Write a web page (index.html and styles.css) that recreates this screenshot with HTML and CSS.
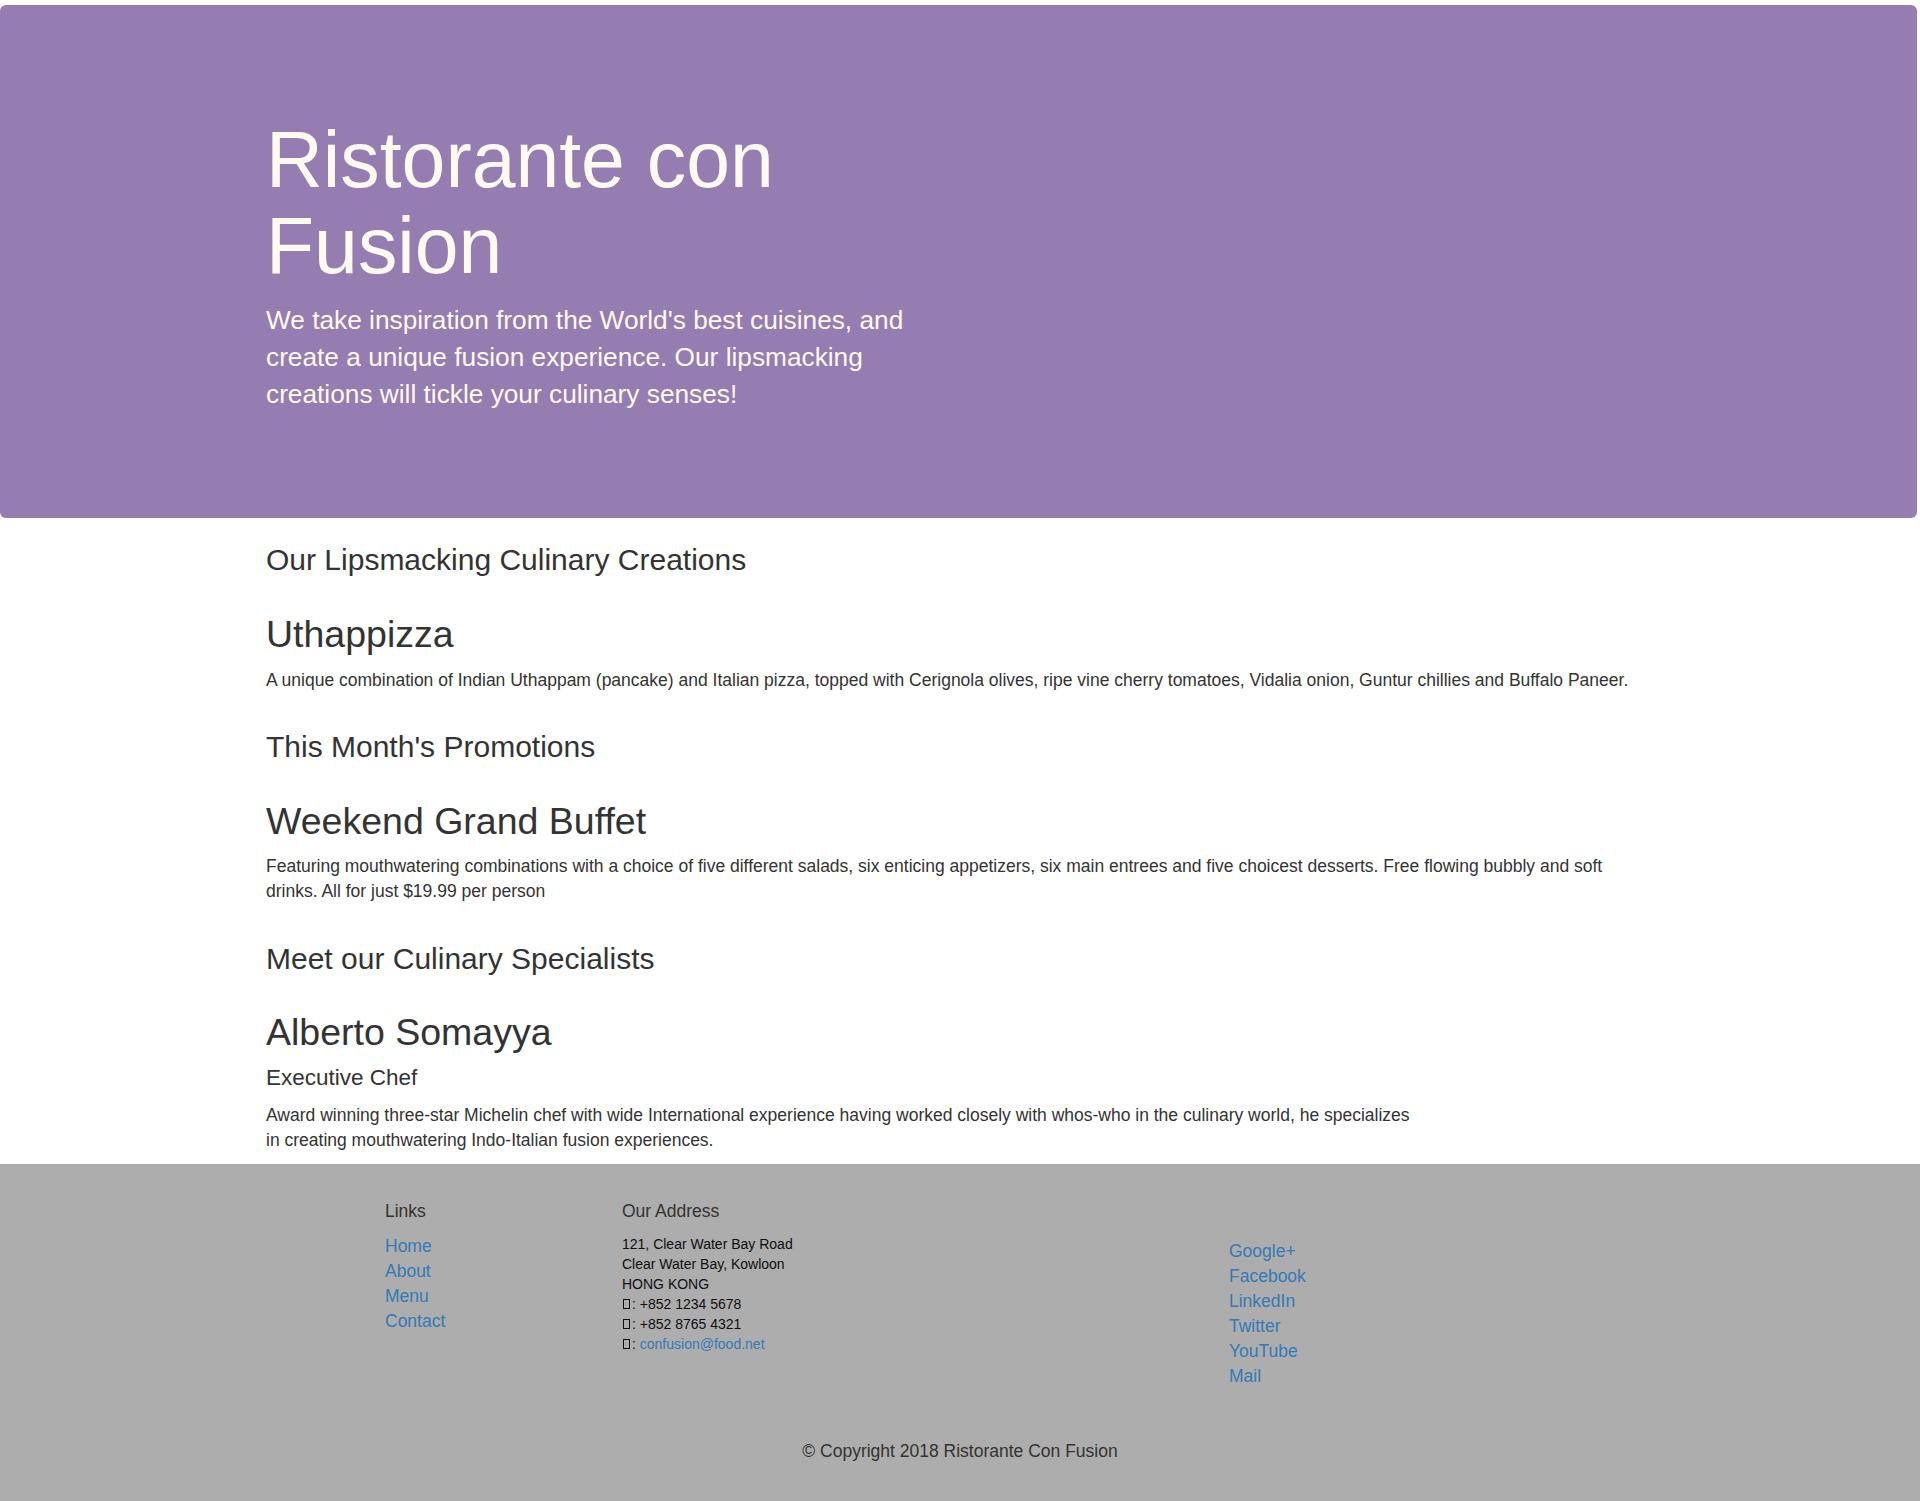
FILE: index.html
```html
<!DOCTYPE html>
<html lang="en">
<head>
<meta charset="utf-8">
<title>Ristorante con Fusion</title>
<link rel="stylesheet" href="styles.css">
</head>
<body>
<header class="jumbotron">
  <div class="hero">
    <h1 class="hero-title">Ristorante con Fusion</h1>
    <p class="hero-lead">We take inspiration from the World's best cuisines, and create a unique fusion experience. Our lipsmacking creations will tickle your culinary senses!</p>
  </div>
</header>

<main class="container">
  <div class="col"><h3>Our Lipsmacking Culinary Creations</h3></div>
  <div class="col">
    <h2>Uthappizza</h2>
    <p>A unique combination of Indian Uthappam (pancake) and Italian pizza, topped with Cerignola olives, ripe vine cherry tomatoes, Vidalia onion, Guntur chillies and Buffalo Paneer.</p>
  </div>
  <div class="col"><h3>This Month's Promotions</h3></div>
  <div class="col">
    <h2>Weekend Grand Buffet</h2>
    <p>Featuring mouthwatering combinations with a choice of five different salads, six enticing appetizers, six main entrees and five choicest desserts. Free flowing bubbly and soft drinks. All for just $19.99 per person</p>
  </div>
  <div class="col"><h3>Meet our Culinary Specialists</h3></div>
  <div class="col col-narrow">
    <h2>Alberto Somayya</h2>
    <h4>Executive Chef</h4>
    <p class="last">Award winning three-star Michelin chef with wide International experience having worked closely with whos-who in the culinary world, he specializes in creating mouthwatering Indo-Italian fusion experiences.</p>
  </div>
</main>

<footer class="footer">
  <div class="footer-row">
    <div class="f-links">
      <h5>Links</h5>
      <ul class="plain">
        <li><a href="#">Home</a></li>
        <li><a href="#">About</a></li>
        <li><a href="#">Menu</a></li>
        <li><a href="#">Contact</a></li>
      </ul>
    </div>
    <div class="f-address">
      <h5>Our Address</h5>
      <address>
        121, Clear Water Bay Road<br>
        Clear Water Bay, Kowloon<br>
        HONG KONG<br>
        <span class="tofu"></span>: +852 1234 5678<br>
        <span class="tofu"></span>: +852 8765 4321<br>
        <span class="tofu"></span>: <a href="#">confusion@food.net</a>
      </address>
    </div>
    <div class="f-social">
      <ul class="plain">
        <li><a href="#">Google+</a></li>
        <li><a href="#">Facebook</a></li>
        <li><a href="#">LinkedIn</a></li>
        <li><a href="#">Twitter</a></li>
        <li><a href="#">YouTube</a></li>
        <li><a href="#">Mail</a></li>
      </ul>
    </div>
  </div>
  <p class="copyright">© Copyright 2018 Ristorante Con Fusion</p>
</footer>
</body>
</html>
```

FILE: styles.css
```css
html, body {
  margin: 0;
  padding: 0;
  background: #ffffff;
}

body {
  font-family: "Liberation Sans", Arial, Helvetica, sans-serif;
  font-size: 17.5px;
  line-height: 25px;
  color: #333333;
}

a {
  color: #337ab7;
  text-decoration: none;
}

/* ---------- Jumbotron ---------- */
.jumbotron {
  margin: 5px 3px 0 0;
  padding: 111.5px 0 106px 266px;
  background: #957cb1;
  color: #fffaf0;
  border-radius: 6px;
}

.hero {
  width: 675px;
}

.hero-title {
  margin: 0;
  font-size: 78.75px;
  line-height: 86.6px;
  font-weight: normal;
}

.hero-lead {
  margin: 12.6px 0 0;
  font-size: 26.25px;
  line-height: 36.7px;
  font-weight: normal;
}

/* ---------- Main content ---------- */
.container {
  display: flow-root;
  padding-left: 266px;
  width: 1390px;
}

.col {
  display: flow-root;
}

.col-narrow {
  width: 1150px;
}

h2, h3, h4, h5 {
  font-weight: normal;
  color: #333333;
}

h3 {
  font-size: 30px;
  line-height: 33px;
  margin: 25px 0 12.5px;
}

h2 {
  font-size: 37.5px;
  line-height: 41.25px;
  margin: 25px 0 12.5px;
}

h4 {
  font-size: 22.5px;
  line-height: 24.75px;
  margin: 12.5px 0 12.5px;
}

p {
  margin: 0 0 12.5px;
}

.last {
  margin-bottom: 11px;
}

/* ---------- Footer ---------- */
.footer {
  background: #adadad;
  padding: 25px 0 27px;
}

.footer-row {
  display: flex;
  padding-left: 385px;
}

.f-links {
  width: 237px;
  display: flow-root;
}

.f-address {
  width: 607px;
  display: flow-root;
}

.f-social {
  padding-top: 49.4px;
}

h5 {
  font-size: 17.5px;
  line-height: 19.25px;
  margin: 12.5px 0 12.5px;
}

.plain {
  list-style: none;
  margin: 0;
  padding: 0;
}

address {
  font-style: normal;
  font-size: 14px;
  line-height: 20px;
  color: #0f0f0f;
  margin: 0;
}

.tofu {
  display: inline-block;
  width: 5px;
  height: 8px;
  border: 1px solid #0f0f0f;
  margin: 0 2px 0 1px;
}

.copyright {
  text-align: center;
  margin: 50.4px 0 12.5px;
}
```
